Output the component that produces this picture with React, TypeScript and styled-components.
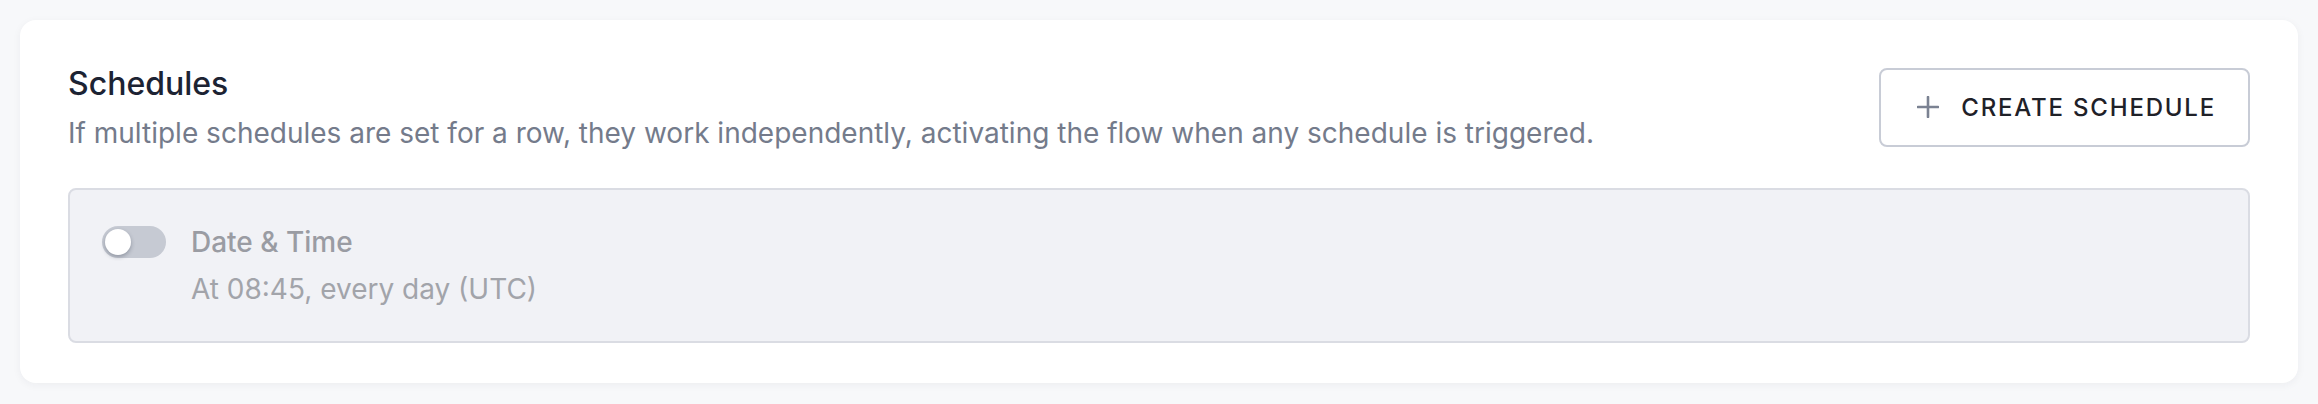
import React, { useState } from 'react';
import styled, { createGlobalStyle } from 'styled-components';

const GlobalStyle = createGlobalStyle`
    html, body {
        margin: 0;
        padding: 0;
        background: #f7f8fa;
        font-family: Inter, "Noto Sans", sans-serif;
    }
`;

const Page = styled.div`
    padding: 20px;
`;

const Card = styled.section`
    background: #ffffff;
    border-radius: 16px;
    padding: 40px 48px 40px 48px;
    box-shadow: 0 2px 8px rgba(30, 40, 60, 0.05);
`;

const Header = styled.div`
    display: flex;
    align-items: center;
    justify-content: space-between;
    gap: 32px;
`;

const Title = styled.h2`
    margin: 0;
    font-size: 32px;
    line-height: 48px;
    font-weight: 500;
    color: #1c2333;
`;

const Description = styled.p`
    margin: 4px 0 0;
    font-size: 28px;
    line-height: 42px;
    color: #747b8b;
`;

const OutlineButton = styled.button`
    display: flex;
    align-items: center;
    gap: 22px;
    height: 79px;
    padding: 0 32px 0 36px;
    background: #ffffff;
    border: 2px solid #c8ccd6;
    border-radius: 8px;
    font-family: Inter, sans-serif;
    font-size: 24px;
    font-weight: 500;
    letter-spacing: 1.8px;
    color: #1f2128;
    cursor: pointer;
`;

const ScheduleList = styled.div`
    margin-top: 34px;
    display: flex;
    flex-direction: column;
    gap: 16px;
`;

const ScheduleRow = styled.div<{ $active: boolean }>`
    display: flex;
    align-items: flex-start;
    gap: 25px;
    padding: 32px;
    background: ${({ $active }) => ($active ? '#ffffff' : '#f1f2f6')};
    border: 2px solid #dadce3;
    border-radius: 8px;
`;

const SwitchTrack = styled.button<{ $on: boolean }>`
    position: relative;
    flex: none;
    width: 64px;
    height: 32px;
    margin-top: 4px;
    padding: 0;
    border: none;
    border-radius: 16px;
    background: ${({ $on }) => ($on ? '#3b5bdb' : '#c6cad3')};
    cursor: pointer;
`;

const SwitchKnob = styled.span<{ $on: boolean }>`
    position: absolute;
    top: 3px;
    left: ${({ $on }) => ($on ? '35px' : '3px')};
    width: 26px;
    height: 26px;
    border-radius: 50%;
    background: #ffffff;
    box-shadow: 0 2px 4px rgba(20, 30, 50, 0.3);
`;

const ScheduleText = styled.div`
    display: flex;
    flex-direction: column;
    gap: 7px;
`;

const ScheduleName = styled.div<{ $active: boolean }>`
    font-size: 28px;
    line-height: 40px;
    font-weight: 500;
    color: ${({ $active }) => ($active ? '#1c2333' : '#9a9ca3')};
`;

const ScheduleWhen = styled.div<{ $active: boolean }>`
    font-size: 28px;
    line-height: 40px;
    color: ${({ $active }) => ($active ? '#747b8b' : '#a2a4aa')};
`;

const PlusIcon = () => (
    <svg width="22" height="22" viewBox="0 0 22 22" fill="none">
        <path d="M11 1v20M1 11h20" stroke="#7b8292" strokeWidth="2.6" strokeLinecap="round" />
    </svg>
);

const schedules = [{ id: 1, name: 'Date & Time', when: 'At 08:45, every day (UTC)', on: false }];

const App = () => {
    const [items, setItems] = useState(schedules);

    const toggle = (id: number) =>
        setItems((list) => list.map((s) => (s.id === id ? { ...s, on: !s.on } : s)));

    return (
        <Page>
            <GlobalStyle />
            <Card>
                <Header>
                    <div>
                        <Title>Schedules</Title>
                        <Description>
                            If multiple schedules are set for a row, they work independently, activating the flow when
                            any schedule is triggered.
                        </Description>
                    </div>
                    <OutlineButton>
                        <PlusIcon />
                        CREATE SCHEDULE
                    </OutlineButton>
                </Header>

                <ScheduleList>
                    {items.map((s) => (
                        <ScheduleRow key={s.id} $active={s.on}>
                            <SwitchTrack $on={s.on} onClick={() => toggle(s.id)}>
                                <SwitchKnob $on={s.on} />
                            </SwitchTrack>
                            <ScheduleText>
                                <ScheduleName $active={s.on}>{s.name}</ScheduleName>
                                <ScheduleWhen $active={s.on}>{s.when}</ScheduleWhen>
                            </ScheduleText>
                        </ScheduleRow>
                    ))}
                </ScheduleList>
            </Card>
        </Page>
    );
};

export default App;
